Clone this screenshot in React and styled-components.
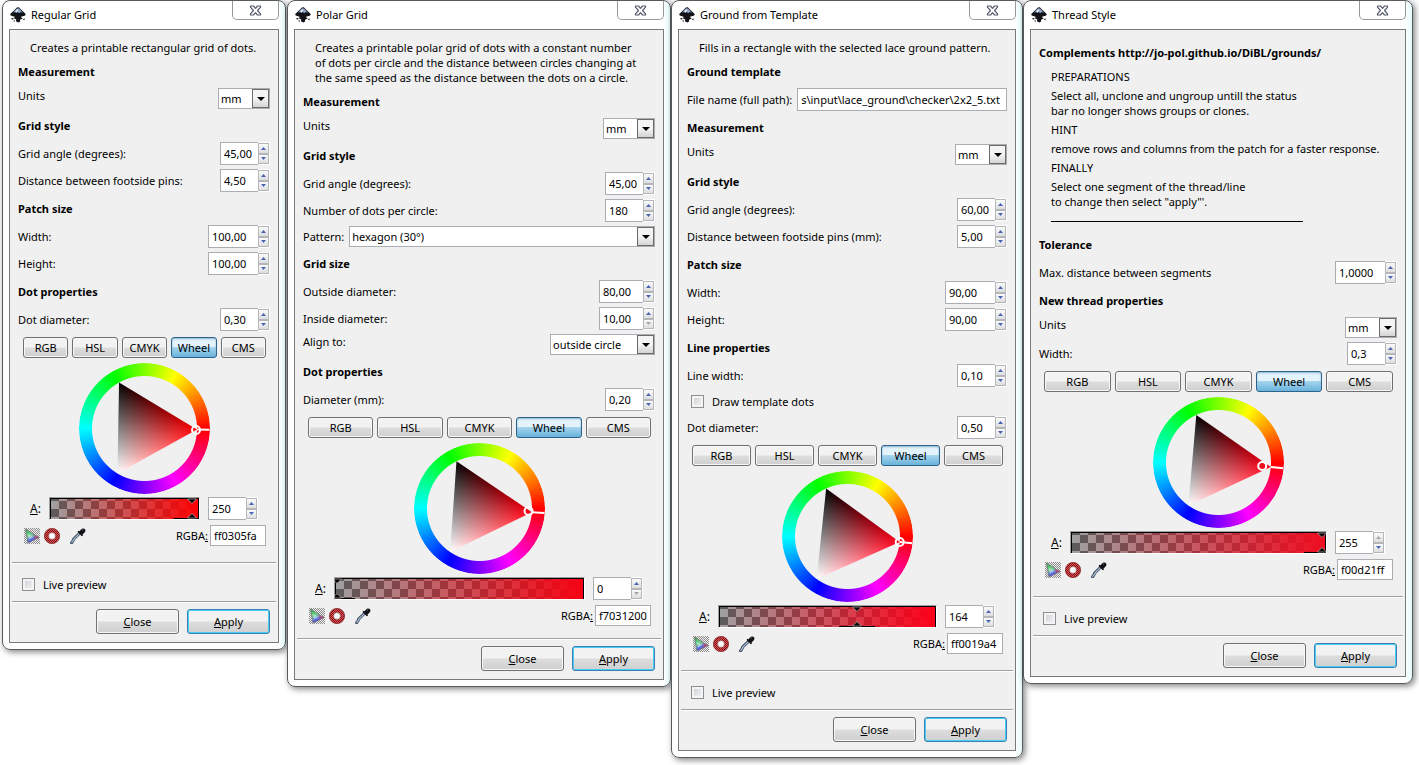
import React, { useEffect, useId, useRef } from "react";
import styled, { createGlobalStyle } from "styled-components";

const GlobalStyle = createGlobalStyle`
  * { box-sizing: border-box; }
  body { margin: 0; background: #fff; color: #000; }
  body, button, input, select {
    font-family: "Noto Sans", "Open Sans", sans-serif;
    font-size: 11px;
    line-height: 15px;
  }
`;

const Desktop = styled.main`
  display: grid;
  grid-template-columns: 285fr 384fr 352fr 390fr;
  align-items: start;
  padding: 0 6px 7px 2px;
`;

const Frame = styled.section`
  min-width: 0;
  padding: 0 6px 6px;
  background: linear-gradient(to left, #e4fafa, #fff 7px);
  border: 1px solid #585b5b;
  border-radius: 8px;
  box-shadow: 2px 2px 6px rgba(0, 0, 0, 0.5);
  &:first-child { margin-right: 1px; }
`;

const TitleBar = styled.header`
  display: flex;
  align-items: center;
  gap: 5px;
  height: 28px;
  padding-left: 1px;
`;

const Title = styled.h1`
  flex: 1;
  margin: 0;
  font-size: 11px;
  font-weight: 400;
  line-height: 16px;
`;

const WindowClose = styled.button`
  display: flex;
  align-items: center;
  justify-content: center;
  align-self: flex-start;
  width: 47px;
  height: 19px;
  padding: 0;
  background: #fff;
  border: 1px solid #96999b;
  border-top: 0;
  border-radius: 0 0 5px 5px;
`;

const Panel = styled.div`
  background: #f0f0f0;
  border: 1px solid #77797a;
`;

const Body = styled.div`
  display: flex;
  flex-direction: column;
  gap: 4px;
  padding: 10px 8px ${(p) => (p.$compact ? 12 : 16)}px;
`;

const Note = styled.p`
  margin: 0 0 0 12px;
  white-space: pre;
`;

const Heading = styled.h2`
  margin: 0;
  font-size: 11px;
  font-weight: 700;
  line-height: 25px;
`;

const Rule = styled.hr`
  width: 252px;
  margin: 8px 0 6px 12px;
  border: 0;
  border-top: 1px solid #000;
`;

const Row = styled.div`
  display: flex;
  align-items: ${(p) => (p.$top ? "flex-start" : "center")};
  justify-content: space-between;
  gap: 5px;
`;

const RowLabel = styled.label`
  line-height: 16px;
  white-space: nowrap;
`;

const TextInput = styled.input`
  flex: ${(p) => (p.$width ? "none" : "1")};
  width: ${(p) => (p.$width ? `${p.$width}px` : "auto")};
  min-width: 0;
  height: ${(p) => p.$height || 23}px;
  padding: 0 3px;
  background: #fff;
  border: 1px solid #abadb3;
  border-radius: 0;
  outline: 0;
`;

const SpinBox = styled.div`
  display: flex;
  width: ${(p) => p.$width}px;
  height: 23px;
`;

const SpinEntry = styled.input`
  flex: 1;
  min-width: 0;
  padding: 0 3px;
  background: #fff;
  border: 1px solid #abadb3;
  border-right: 0;
  border-radius: 0;
  outline: 0;
`;

const SpinArrows = styled.div`
  display: flex;
  flex-direction: column;
  width: 12px;
  background: #fff;
  padding: 1px 1px 1px 0;
`;

const SpinButton = styled.button`
  display: flex;
  flex: 1;
  align-items: center;
  justify-content: center;
  min-height: 0;
  padding: 0;
  background: linear-gradient(#fafafa, #dedede);
  border: 1px solid #b4b6ba;
  color: ${(p) => (p.disabled ? "#a6a6a6" : "#4a63b4")};
`;

const Combo = styled.div`
  display: flex;
  flex: ${(p) => (p.$width ? "none" : "1")};
  width: ${(p) => (p.$width ? `${p.$width}px` : "auto")};
  height: 21px;
  background: #fff;
  border: 1px solid #abadb3;
`;

const ComboSelect = styled.select`
  flex: 1;
  min-width: 0;
  padding: 0 0 0 2px;
  appearance: none;
  background: transparent;
  border: 0;
  outline: 0;
`;

const ComboArrow = styled.span`
  display: flex;
  align-items: center;
  justify-content: center;
  width: 17px;
  background: linear-gradient(#f4f4f4 50%, #d4d4d4);
  border: 1px solid #6b6b6b;
  pointer-events: none;
`;

const CheckRow = styled.div`
  display: flex;
  align-items: center;
  gap: 8px;
  height: 21px;
  padding-left: 4px;
`;

const CheckInput = styled.input`
  width: 13px;
  height: 13px;
  margin: 0;
  appearance: none;
  background: linear-gradient(135deg, #c9ced4, #f8f8f8);
  border: 1px solid #8e8f8f;
  box-shadow: inset 0 0 0 2px #f4f4f4;
  &:checked { background: #4a63b4; }
`;

const Picker = styled.div`
  display: flex;
  flex-direction: column;
  padding: 2px 4px 0 5px;
`;

const TabBar = styled.div`
  display: flex;
  gap: 4px;
`;

const TabButton = styled.button`
  flex: 1 1 0;
  min-width: 0;
  height: 21px;
  padding: 0;
  color: #000;
  background: ${(p) =>
    p.$active
      ? "linear-gradient(#e3f3fc 45%, #a5d4ee 50%, #68b3db)"
      : "linear-gradient(#f2f2f2 48%, #dddddd 52%, #cfcfcf)"};
  border: 1px solid ${(p) => (p.$active ? "#2c628b" : "#707070")};
  border-radius: 3px;
  box-shadow: ${(p) => (p.$active ? "inset 0 1px 2px #8ab6ce" : "inset 0 0 0 1px #f8f8f8")};
`;

const WheelBox = styled.div`
  display: grid;
  place-items: center;
  margin: 5px 0 3px;
  padding-right: 1px;
  > * { grid-area: 1 / 1; }
`;

const HueRing = styled.div`
  width: 131px;
  height: 131px;
  border-radius: 50%;
  background: conic-gradient(from 90deg, #f00, #f0f, #00f, #0ff, #0f0, #ff0, #f00);
  mask: radial-gradient(circle, transparent 52px, #000 53px);
`;

const WheelDrawing = styled.svg`
  isolation: isolate;
  .mix { isolation: isolate; }
  .add { mix-blend-mode: plus-lighter; }
`;

const AlphaRow = styled.div`
  display: flex;
  align-items: center;
  padding: 0 8px 0 7px;
  margin-bottom: 5px;
`;

const AlphaLabel = styled.label`
  width: 19px;
  font-size: 12px;
`;

const Slider = styled.div`
  position: relative;
  flex: 1;
  height: 23px;
  margin-right: 8px;
  overflow: hidden;
  border: 1px solid #a0a0a0;
  border-right-color: #fff;
  border-bottom-color: #fff;
`;

const SliderFill = styled.div`
  height: 21px;
  border: 1px solid #000;
  border-bottom: 0;
  background:
    linear-gradient(to right, transparent, ${(p) => p.$color}),
    conic-gradient(#5c5c5c 25%, #a0a0a0 0 50%, #5c5c5c 0 75%, #a0a0a0 0) 0 2px / 16px 16px;
`;

const SliderMark = styled.svg`
  position: absolute;
  top: -1px;
  margin-left: -18px;
`;

const SliderInput = styled.input`
  position: absolute;
  inset: 0;
  width: 100%;
  height: 100%;
  margin: 0;
  opacity: 0;
`;

const CodeRow = styled.div`
  display: flex;
  align-items: center;
`;

const IconButton = styled.button`
  display: flex;
  width: 16px;
  height: 16px;
  margin: 0 ${(p) => p.$gap || 0}px 0 1px;
  padding: 0;
  background: none;
  border: 0;
`;

const CodeLabel = styled.label`
  margin-left: auto;
  padding-right: 2px;
`;

const Separator = styled.hr`
  height: 2px;
  margin: 0 2px;
  border: 0;
  border-top: 1px solid #a0a0a0;
  background: #fff;
`;

const PreviewArea = styled.div`
  height: 37px;
  padding: 10px 8px 0;
`;

const Footer = styled.footer`
  display: flex;
  justify-content: flex-end;
  gap: 8px;
  padding: 6px 8px 8px;
`;

const PushButton = styled.button`
  width: 83px;
  height: 25px;
  padding: 0;
  color: #000;
  background: linear-gradient(#f2f2f2 48%, #dddddd 52%, #cfcfcf);
  border: 1px solid ${(p) => (p.$primary ? "#3c7fb1" : "#707070")};
  border-radius: 3px;
  box-shadow: inset 0 0 0 1px ${(p) => (p.$primary ? "#46d0f5" : "#f8f8f8")};
`;

function InkscapeIcon() {
  return (
    <svg width="16" height="16" viewBox="0 0 16 16" aria-hidden="true">
      <path d="M8 0.3C7.2 0.3 6.6 0.8 6 1.4L0.8 6.4C-.2 7.5.2 8.2 1.4 8.7L4.6 9.7C5.3 10 4.6 10.6 3.4 10.8C4 11.9 6 12 6.4 12.6C6 13.4 5.2 14.2 8.2 15.4C10.6 14.8 10.4 13.8 9.8 13.1C9.9 12.4 11.8 12 12.5 11.4C12.6 10.8 10.2 10.2 11 9.7L14.6 8.7C15.8 8.3 15.9 7.4 15.2 6.4L10 1.4C9.4.7 8.8.3 8 .3Z" fill="#111318" />
      <path d="M8 1.2C7.4 1.2 6.9 1.6 6.4 2.1L3 5.4L5.1 5L6.3 6.1L7.7 4.9L9.2 6.3L10.6 5L13 5.7L9.6 2.1C9.1 1.6 8.6 1.2 8 1.2Z" fill="#8fa6c8" />
      <path d="M7.6 2L5.2 4.4L6.4 5.2L8 3.7Z" fill="#e9eef6" />
      <path d="M1 11.2L3 11L3.8 12.2L2 12.5ZM12.8 12.2L14.8 11.6L15 12.6L13.4 13ZM3.6 13.6H5V14.4H3.6Z" fill="#222" />
    </svg>
  );
}

function CrossIcon() {
  return (
    <svg width="13" height="11" viewBox="0 0 13 11" aria-hidden="true">
      <path d="M1.5 1H4.5L6.5 3.4L8.5 1H11.5V2.2L8.6 5.5L11.5 8.8V10H8.5L6.5 7.6L4.5 10H1.5V8.8L4.4 5.5L1.5 2.2Z" fill="#fff" stroke="#545b6c" strokeWidth="1.2" strokeLinejoin="round" />
    </svg>
  );
}

function Arrow({ up, width = 5, height = 3 }) {
  const points = up ? `0,${height} ${width / 2},0 ${width},${height}` : `0,0 ${width},0 ${width / 2},${height}`;
  return (
    <svg width={width} height={height} aria-hidden="true">
      <polygon points={points} fill="currentColor" />
    </svg>
  );
}

function GamutIcon() {
  const id = useId();
  return (
    <svg width="16" height="16" viewBox="0 0 16 16" aria-hidden="true">
      <defs>
        <pattern id={`${id}d`} width="2" height="2" patternUnits="userSpaceOnUse">
          <path d="M0 0H1V1H0ZM1 1H2V2H1Z" fill="#8c8c8c" shapeRendering="crispEdges" />
        </pattern>
        <linearGradient id={`${id}g`} x1="0" y1="0" x2="0.4" y2="1">
          <stop offset="0" stopColor="#1fae3c" />
          <stop offset="0.5" stopColor="#6fdc90" />
          <stop offset="0.75" stopColor="#5a7ff0" />
          <stop offset="1" stopColor="#3a1cd0" />
        </linearGradient>
        <linearGradient id={`${id}r`} x1="0" y1="0" x2="1" y2="0">
          <stop offset="0.55" stopColor="#f02040" stopOpacity="0" />
          <stop offset="0.95" stopColor="#f01838" />
        </linearGradient>
      </defs>
      <rect width="16" height="16" fill={`url(#${id}d)`} />
      <path d="M1.5 1L14.8 9.5L4 15Z" fill={`url(#${id}g)`} />
      <path d="M1.5 1L14.8 9.5L4 15Z" fill={`url(#${id}r)`} stroke="#6a6a6a" strokeWidth="0.7" />
      <path d="M3.5 5.5L9.5 8.8L5 11.5Z" fill="#fff" opacity="0.45" />
      <rect width="16" height="16" fill={`url(#${id}d)`} opacity="0.2" />
    </svg>
  );
}

function InkLimitIcon() {
  const id = useId();
  return (
    <svg width="16" height="16" viewBox="0 0 16 16" aria-hidden="true">
      <defs>
        <pattern id={id} width="2" height="2" patternUnits="userSpaceOnUse">
          <path d="M0 0H2V2H0Z" fill="#f0484c" />
          <path d="M0 0H1V1H0ZM1 1H2V2H1Z" fill="#6e2020" shapeRendering="crispEdges" />
        </pattern>
      </defs>
      <circle cx="8" cy="8" r="5.5" fill="none" stroke={`url(#${id})`} strokeWidth="4.6" />
      <circle cx="8" cy="8" r="7.6" fill="none" stroke="#7a2020" strokeWidth="0.6" />
      <circle cx="8" cy="8" r="3.3" fill="#fff" stroke="#8a5a5a" strokeWidth="0.5" />
    </svg>
  );
}

function DropperIcon() {
  return (
    <svg width="16" height="16" viewBox="0 0 16 16" aria-hidden="true">
      <path d="M9.6 5.2L4 10.8C3 12 3.2 13 1.6 14.8" fill="none" stroke="#3c4a5c" strokeWidth="3" strokeLinecap="round" />
      <path d="M9.6 5.4L4.2 10.8C3.4 12 3.2 13 1.8 14.4" fill="none" stroke="#a9c0da" strokeWidth="1.3" strokeLinecap="round" />
      <path d="M10.4 2.2C11.6.4 13.6-.2 14.8 1C16 2.2 15.4 4.2 13.6 5.4L12.6 6.2L13 7.6L11.8 8.2L7.6 4L8.4 2.8L9.8 3.2Z" fill="#101114" />
      <path d="M12 2.4L13.2 1.6" stroke="#888" strokeWidth="0.8" />
    </svg>
  );
}

function ColorWheel({ color, hue }) {
  const id = useId();
  const center = 65.5;
  const rad = (deg) => (deg * Math.PI) / 180;
  const at = (deg, r) => [center + r * Math.cos(rad(deg)), center - r * Math.sin(rad(deg))];
  const tip = at(hue, 52.5);
  const black = at(hue + 120, 52.5);
  const white = at(hue + 240, 52.5);
  const mid = (p, q) => [(p[0] + q[0]) / 2, (p[1] + q[1]) / 2];
  const tipBase = mid(black, white);
  const whiteBase = mid(black, tip);
  const [r, g, b] = color;
  const whiteShare = Math.min(r, g, b) / 255;
  const tipShare = (Math.max(r, g, b) - Math.min(r, g, b)) / 255;
  const blackShare = 1 - whiteShare - tipShare;
  const mark = [0, 1].map((i) => tip[i] * tipShare + white[i] * whiteShare + black[i] * blackShare);
  const lineEnd = at(hue, 65);
  const points = [tip, black, white].map((p) => p.join(",")).join(" ");
  const pure = `hsl(${hue} 100% 50%)`;
  return (
    <WheelBox>
      <HueRing />
      <WheelDrawing width="131" height="131" viewBox="0 0 131 131" role="img" aria-label="Color wheel">
        <defs>
          <linearGradient id={`${id}t`} gradientUnits="userSpaceOnUse" x1={tipBase[0]} y1={tipBase[1]} x2={tip[0]} y2={tip[1]}>
            <stop offset="0" stopColor="#000" />
            <stop offset="1" stopColor={pure} />
          </linearGradient>
          <linearGradient id={`${id}w`} gradientUnits="userSpaceOnUse" x1={whiteBase[0]} y1={whiteBase[1]} x2={white[0]} y2={white[1]}>
            <stop offset="0" stopColor="#000" />
            <stop offset="1" stopColor="#fff" />
          </linearGradient>
          <clipPath id={`${id}c`}>
            <polygon points={points} />
          </clipPath>
        </defs>
        <g className="mix" clipPath={`url(#${id}c)`}>
          <rect width="131" height="131" fill={`url(#${id}t)`} />
          <rect className="add" width="131" height="131" fill={`url(#${id}w)`} />
        </g>
        <line x1={tip[0]} y1={tip[1]} x2={lineEnd[0]} y2={lineEnd[1]} stroke="#fff" strokeWidth="2" />
        <circle cx={mark[0]} cy={mark[1]} r="4" fill="none" stroke="#fff" strokeWidth="2" />
      </WheelDrawing>
    </WheelBox>
  );
}

function Spin({ id, value, width, atMin, atMax, label }) {
  return (
    <SpinBox $width={width}>
      <SpinEntry id={id} type="text" role="spinbutton" defaultValue={value} aria-label={label} />
      <SpinArrows>
        <SpinButton type="button" aria-label="Increase" disabled={atMax}><Arrow up /></SpinButton>
        <SpinButton type="button" aria-label="Decrease" disabled={atMin}><Arrow /></SpinButton>
      </SpinArrows>
    </SpinBox>
  );
}

function SpinRow({ label, value, width = 50, ...rest }) {
  const id = useId();
  return (
    <Row>
      <RowLabel htmlFor={id}>{label}</RowLabel>
      <Spin id={id} value={value} width={width} {...rest} />
    </Row>
  );
}

function SelectRow({ label, value, width, top }) {
  const id = useId();
  return (
    <Row $top={top}>
      <RowLabel htmlFor={id}>{label}</RowLabel>
      <Combo $width={width}>
        <ComboSelect id={id} defaultValue={value}>
          <option>{value}</option>
        </ComboSelect>
        <ComboArrow><Arrow width={8} height={4} /></ComboArrow>
      </Combo>
    </Row>
  );
}

function FileRow({ label, value }) {
  const id = useId();
  const ref = useRef(null);
  useEffect(() => {
    ref.current.scrollLeft = ref.current.scrollWidth;
  }, []);
  return (
    <Row>
      <RowLabel htmlFor={id}>{label}</RowLabel>
      <TextInput id={id} ref={ref} type="text" defaultValue={value} />
    </Row>
  );
}

function Check({ label }) {
  const id = useId();
  return (
    <CheckRow>
      <CheckInput id={id} type="checkbox" />
      <RowLabel htmlFor={id}>{label}</RowLabel>
    </CheckRow>
  );
}

const MODES = ["RGB", "HSL", "CMYK", "Wheel", "CMS"];

function ColorPicker({ color, hue, alpha, code }) {
  const id = useId();
  const share = alpha / 255;
  return (
    <Picker>
      <TabBar>
        {MODES.map((mode) => (
          <TabButton key={mode} type="button" $active={mode === "Wheel"} aria-pressed={mode === "Wheel"}>
            {mode}
          </TabButton>
        ))}
      </TabBar>
      <ColorWheel color={color} hue={hue} />
      <AlphaRow>
        <AlphaLabel htmlFor={`${id}a`}><u>A</u>:</AlphaLabel>
        <Slider>
          <SliderFill $color={`rgb(${color.join(",")})`} />
          <SliderMark width="36" height="23" viewBox="0 0 36 23" style={{ left: `calc(2px + (100% - 6px) * ${share})` }}>
            <path d="M0 0H36V2H0ZM0 21H36V23H0Z" fill="#000" />
            <path d="M13.5 2H22.5L18 6.5ZM13.5 21H22.5L18 16.5Z" fill="#000" stroke="#c9b8b8" strokeWidth="0.7" />
          </SliderMark>
          <SliderInput type="range" min="0" max="255" defaultValue={alpha} aria-label="Alpha" />
        </Slider>
        <Spin id={`${id}a`} value={String(alpha)} width={50} atMin={alpha === 0} atMax={alpha === 255} />
      </AlphaRow>
      <CodeRow>
        <IconButton type="button" aria-label="Out of gamut" $gap={3}><GamutIcon /></IconButton>
        <IconButton type="button" aria-label="Too much ink" $gap={9}><InkLimitIcon /></IconButton>
        <IconButton type="button" aria-label="Pick color"><DropperIcon /></IconButton>
        <CodeLabel htmlFor={`${id}c`}>RGBA<u>:</u></CodeLabel>
        <TextInput id={`${id}c`} type="text" defaultValue={code} $width={56} $height={21} />
      </CodeRow>
    </Picker>
  );
}

function Dialog({ title, preview, children }) {
  return (
    <Frame aria-label={title}>
      <TitleBar>
        <InkscapeIcon />
        <Title>{title}</Title>
        <WindowClose type="button" aria-label="Close window"><CrossIcon /></WindowClose>
      </TitleBar>
      <Panel>
        <Body $compact={!preview}>{children}</Body>
        <Separator />
        {preview && (
          <>
            <PreviewArea><Check label="Live preview" /></PreviewArea>
            <Separator />
          </>
        )}
        <Footer>
          <PushButton type="button"><u>C</u>lose</PushButton>
          <PushButton type="button" $primary><u>A</u>pply</PushButton>
        </Footer>
      </Panel>
    </Frame>
  );
}

export default function App() {
  return (
    <>
      <GlobalStyle />
      <Desktop>
        <Dialog title="Regular Grid" preview>
          <Note>Creates a printable rectangular grid of dots.</Note>
          <Heading>Measurement</Heading>
          <SelectRow label="Units" value="mm" width={52} top />
          <Heading>Grid style</Heading>
          <SpinRow label="Grid angle (degrees):" value="45,00" />
          <SpinRow label="Distance between footside pins:" value="4,50" />
          <Heading>Patch size</Heading>
          <SpinRow label="Width:" value="100,00" width={62} />
          <SpinRow label="Height:" value="100,00" width={62} />
          <Heading>Dot properties</Heading>
          <SpinRow label="Dot diameter:" value="0,30" />
          <ColorPicker color={[255, 3, 5]} hue={359} alpha={250} code="ff0305fa" />
        </Dialog>

        <Dialog title="Polar Grid">
          <Note>
            {"Creates a printable polar grid of dots with a constant number\nof dots per circle and the distance between circles changing at\nthe same speed as the distance between the dots on a circle."}
          </Note>
          <Heading>Measurement</Heading>
          <SelectRow label="Units" value="mm" width={52} top />
          <Heading>Grid style</Heading>
          <SpinRow label="Grid angle (degrees):" value="45,00" />
          <SpinRow label="Number of dots per circle:" value="180" />
          <SelectRow label="Pattern:" value="hexagon (30°)" />
          <Heading>Grid size</Heading>
          <SpinRow label="Outside diameter:" value="80,00" width={56} />
          <SpinRow label="Inside diameter:" value="10,00" width={56} atMin />
          <SelectRow label="Align to:" value="outside circle" width={105} top />
          <Heading>Dot properties</Heading>
          <SpinRow label="Diameter (mm):" value="0,20" />
          <ColorPicker color={[247, 3, 18]} hue={356} alpha={0} code="f7031200" />
        </Dialog>

        <Dialog title="Ground from Template" preview>
          <Note>Fills in a rectangle with the selected lace ground pattern.</Note>
          <Heading>Ground template</Heading>
          <FileRow label="File name (full path):" value="s\input\lace_ground\checker\2x2_5.txt" />
          <Heading>Measurement</Heading>
          <SelectRow label="Units" value="mm" width={52} top />
          <Heading>Grid style</Heading>
          <SpinRow label="Grid angle (degrees):" value="60,00" />
          <SpinRow label="Distance between footside pins (mm):" value="5,00" />
          <Heading>Patch size</Heading>
          <SpinRow label="Width:" value="90,00" width={62} />
          <SpinRow label="Height:" value="90,00" width={62} />
          <Heading>Line properties</Heading>
          <SpinRow label="Line width:" value="0,10" />
          <Check label="Draw template dots" />
          <SpinRow label="Dot diameter:" value="0,50" />
          <ColorPicker color={[255, 0, 25]} hue={354} alpha={164} code="ff0019a4" />
        </Dialog>

        <Dialog title="Thread Style" preview>
          <Heading>Complements http://jo-pol.github.io/DiBL/grounds/</Heading>
          <Note>PREPARATIONS</Note>
          <Note>{"Select all, unclone and ungroup untill the status\nbar no longer shows groups or clones."}</Note>
          <Note>HINT</Note>
          <Note>remove rows and columns from the patch for a faster response.</Note>
          <Note>FINALLY</Note>
          <Note>{"Select one segment of the thread/line\nto change then select \"apply\"'."}</Note>
          <Rule />
          <Heading>Tolerance</Heading>
          <SpinRow label="Max. distance between segments" value="1,0000" width={62} />
          <Heading>New thread properties</Heading>
          <SelectRow label="Units" value="mm" width={52} top />
          <SpinRow label="Width:" value="0,3" />
          <ColorPicker color={[240, 13, 33]} hue={355} alpha={255} code="f00d21ff" />
        </Dialog>
      </Desktop>
    </>
  );
}
